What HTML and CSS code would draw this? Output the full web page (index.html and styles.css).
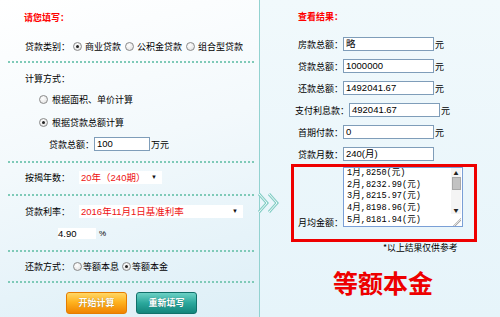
FILE: index.html
```html
<!DOCTYPE html>
<html lang="zh-CN">
<head>
    <meta charset="UTF-8">
    <title>房贷计算器</title>
    <link rel="stylesheet" href="styles.css">
</head>
<body>
    <div class="page">
        <div class="left">
            <div class="title">请您填写：</div>
            <div class="row row-type">
                <span>贷款类别：</span>
                <span class="radio checked"></span><span class="opt">商业贷款</span>
                <span class="radio"></span><span class="opt">公积金贷款</span>
                <span class="radio"></span><span class="opt">组合型贷款</span>
            </div>
            <div class="sep sep-1"></div>
            <div class="row row-way">计算方式：</div>
            <div class="row row-r1"><span class="radio"></span><span class="opt">根据面积、单价计算</span></div>
            <div class="row row-r2"><span class="radio checked"></span><span class="opt">根据贷款总额计算</span></div>
            <div class="row row-amount">
                <span>贷款总额：</span>
                <span class="input small">100</span>
                <span class="unit">万元</span>
            </div>
            <div class="sep sep-2"></div>
            <div class="row row-years">
                <span>按揭年数：</span>
                <span class="select sel-years">20年（240期）<i class="caret">▼</i></span>
            </div>
            <div class="sep sep-3"></div>
            <div class="row row-rate">
                <span>贷款利率：</span>
                <span class="select sel-rate">2016年11月1日基准利率<i class="caret">▼</i></span>
            </div>
            <div class="row row-pct">
                <span class="pct-box">4.90</span><span class="pct">%</span>
            </div>
            <div class="sep sep-4"></div>
            <div class="row row-pay">
                <span>还款方式：</span>
                <span class="radio"></span><span class="opt tight">等额本息</span>
                <span class="radio checked"></span><span class="opt tight">等额本金</span>
            </div>
            <div class="sep"></div>
            <div class="buttons">
                <span class="btn btn-orange">开始计算</span>
                <span class="btn btn-teal">重新填写</span>
            </div>
        </div>

        <div class="right">
            <div class="title">查看结果：</div>
            <div class="res-row"><span class="lbl">房款总额：</span><span class="input wide">略</span><span class="unit">元</span></div>
            <div class="res-row"><span class="lbl">贷款总额：</span><span class="input wide">1000000</span><span class="unit">元</span></div>
            <div class="res-row"><span class="lbl">还款总额：</span><span class="input wide">1492041.67</span><span class="unit">元</span></div>
            <div class="res-row row-interest"><span class="lbl">支付利息款：</span><span class="input wide">492041.67</span><span class="unit">元</span></div>
            <div class="res-row"><span class="lbl">首期付款：</span><span class="input wide">0</span><span class="unit">元</span></div>
            <div class="res-row"><span class="lbl">贷款月数：</span><span class="input wide">240(月)</span></div>
            <div class="redbox">
                <span class="lbl">月均金额：</span>
                <div class="list">
                    <div class="lines">
                        <div>1月,8250(元)</div>
                        <div>2月,8232.99(元)</div>
                        <div>3月,8215.97(元)</div>
                        <div>4月,8198.96(元)</div>
                        <div>5月,8181.94(元)</div>
                    </div>
                    <div class="scroll">
                        <span class="arr">▲</span>
                        <span class="thumb"></span>
                        <span class="track"></span>
                        <span class="arr">▼</span>
                        <span class="grip"></span>
                    </div>
                </div>
            </div>
            <div class="note">*以上结果仅供参考</div>
            <div class="big">等额本金</div>
        </div>

        <svg class="chevron" width="24" height="22" viewBox="0 0 24 22">
            <polyline points="2,2 10,11 2,20" fill="none" stroke="#86cfc6" stroke-width="3"/>
            <polyline points="2,2 10,11 2,20" fill="none" stroke="#f4fbfc" stroke-width="1"/>
            <polyline points="12,2 20,11 12,20" fill="none" stroke="#86cfc6" stroke-width="3"/>
            <polyline points="12,2 20,11 12,20" fill="none" stroke="#f4fbfc" stroke-width="1"/>
        </svg>
    </div>
</body>
</html>
```

FILE: styles.css
```css
body {
    margin: 0;
    font-family: "Noto Sans CJK SC", "Liberation Sans", sans-serif;
    font-size: 9px;
    color: #000;
}
.page {
    position: relative;
    width: 500px;
    height: 317px;
    overflow: hidden;
    display: flex;
    background: linear-gradient(180deg, #eef8fc 0%, #e3f2f8 100%);
}
.left {
    width: 259px;
    height: 317px;
    border-right: 1px solid #93d2d0;
    background: linear-gradient(165deg, #ffffff 0%, #f3f9fc 45%, #ddeff7 100%);
    box-sizing: content-box;
}
.right {
    flex: 1;
    padding-left: 38px;
    background: linear-gradient(180deg, #f1f9fc 0%, #e6f4fa 100%);
}
.title {
    color: #ff0000;
    font-weight: bold;
    height: 36px;
    line-height: 36px;
}
.left .title {
    padding-left: 24px;
}
.right .title {
    height: 33px;
    line-height: 33px;
}
.row {
    display: flex;
    align-items: center;
    padding-left: 25px;
    white-space: nowrap;
}
.row-type { height: 20px; }
.row-way { height: 16px; margin-top: 7px; }
.row-r1 { height: 26px; padding-left: 39px; }
.row-r2 { height: 20px; padding-left: 39px; }
.row-amount { height: 24px; padding-left: 49px; }
.row-years { height: 28px; }
.row-rate { height: 30px; }
.row-pct { height: 14px; padding-left: 58px; }
.row-pay { height: 29px; }
.sep {
    margin: 0 5px 0 8px;
    height: 0;
    border-top: 2px dotted #7fcab8;
}
.sep-1 { margin-top: 5px; }
.sep-2 { margin-top: 5px; }
.sep-3 { margin-top: 3px; }
.sep-4 { margin-top: 10px; }
.radio {
    display: inline-block;
    width: 7px;
    height: 7px;
    border: 1px solid #8a8a8a;
    border-radius: 50%;
    background: radial-gradient(circle at 40% 35%, #ffffff 0%, #dcdcdc 100%);
    position: relative;
    margin-left: 3px;
}
.radio.checked::after {
    content: "";
    position: absolute;
    left: 2px;
    top: 2px;
    width: 3px;
    height: 3px;
    border-radius: 50%;
    background: #222;
}
.opt {
    margin-left: 3px;
    margin-right: 1px;
}
.row-r1 .radio, .row-r2 .radio { margin-left: 0; }
.row-r1 .opt, .row-r2 .opt { margin-left: 4px; }
.opt.tight { margin-left: 1px; margin-right: 0; }
.input {
    display: inline-block;
    box-sizing: border-box;
    background: #fff;
    border: 1px solid #7f9db9;
    font-family: "Liberation Sans", "Noto Sans CJK SC", sans-serif;
    font-size: 9.5px;
    line-height: 11px;
    padding: 0 2px;
    color: #000;
}
.input.small {
    width: 56px;
    height: 14px;
    margin-left: 0;
}
.input.wide {
    width: 91px;
    height: 14px;
}
.unit {
    margin-left: 1px;
}
.select {
    position: relative;
    display: inline-block;
    box-sizing: border-box;
    height: 13px;
    line-height: 13px;
    background: #fff;
    color: #ee1111;
    font-family: "Liberation Sans", "Noto Sans CJK SC", sans-serif;
    font-size: 9.5px;
    padding-left: 2px;
    margin-left: 9px;
}
.sel-years { width: 83px; }
.sel-rate { width: 164px; }
.caret {
    position: absolute;
    right: 5px;
    top: 0;
    font-style: normal;
    font-size: 6px;
    color: #111;
}
.pct-box {
    display: inline-block;
    width: 38px;
    height: 11px;
    line-height: 11px;
    background: #fff;
    font-family: "Liberation Sans", sans-serif;
    font-size: 9.5px;
}
.pct {
    margin-left: 3px;
    font-family: "Liberation Sans", sans-serif;
    font-size: 8px;
}
.buttons {
    display: flex;
    gap: 9px;
    padding-left: 66px;
    margin-top: 9px;
}
.btn {
    display: inline-block;
    width: 61px;
    height: 22px;
    box-sizing: border-box;
    border-radius: 3px;
    color: #fff;
    font-weight: bold;
    text-align: center;
    line-height: 20px;
    text-shadow: 0 0 1px rgba(0, 0, 0, 0.4);
}
.btn-orange {
    background: linear-gradient(180deg, #ffd766 0%, #ffb31f 45%, #f08400 100%);
    border: 1px solid #e57c00;
}
.btn-teal {
    background: linear-gradient(180deg, #6cd1c5 0%, #2ba89c 50%, #13857b 100%);
    border: 1px solid #11706a;
}
.res-row {
    display: flex;
    align-items: center;
    height: 22px;
    white-space: nowrap;
}
.lbl {
    width: 45px;
}
.row-interest .lbl {
    width: 54px;
    margin-left: -3px;
}
.redbox {
    display: flex;
    align-items: flex-end;
    width: 186px;
    height: 78px;
    box-sizing: border-box;
    border: 3px solid #ee0000;
    margin-left: -7px;
    margin-top: -1px;
    padding: 0 0 12px 4px;
}
.redbox .lbl {
    margin-bottom: -2px;
}
.list {
    display: flex;
    width: 120px;
    height: 60px;
    box-sizing: border-box;
    border: 1px solid #7a9fd6;
    background: #fff;
}
.lines {
    flex: 1;
    padding: 0 0 0 3px;
    font-family: "Liberation Mono", "Noto Sans CJK SC", monospace;
    font-size: 8.6px;
    line-height: 11.7px;
    overflow: hidden;
}
.scroll {
    width: 10px;
    margin-right: 1px;
    display: flex;
    flex-direction: column;
    align-items: center;
    background: #f4f4f4;
}
.arr {
    font-size: 5px;
    height: 9px;
    line-height: 10px;
    color: #222;
}
.thumb {
    width: 9px;
    height: 13px;
    background: #c2c2c2;
    border: 1px solid #a8a8a8;
    box-sizing: border-box;
}
.track {
    flex: 1;
}
.grip {
    width: 10px;
    height: 12px;
    background: linear-gradient(135deg, #fff 60%, #999 62%, #fff 66%, #999 74%, #fff 78%);
}
.note {
    padding-left: 85px;
    margin-top: 0;
    height: 12px;
    line-height: 12px;
    font-size: 8.8px;
}
.big {
    margin-top: 13px;
    padding-left: 35px;
    font-size: 25px;
    font-weight: bold;
    color: #ee0000;
    line-height: 30px;
}
.chevron {
    position: absolute;
    left: 257px;
    top: 192px;
}
```
